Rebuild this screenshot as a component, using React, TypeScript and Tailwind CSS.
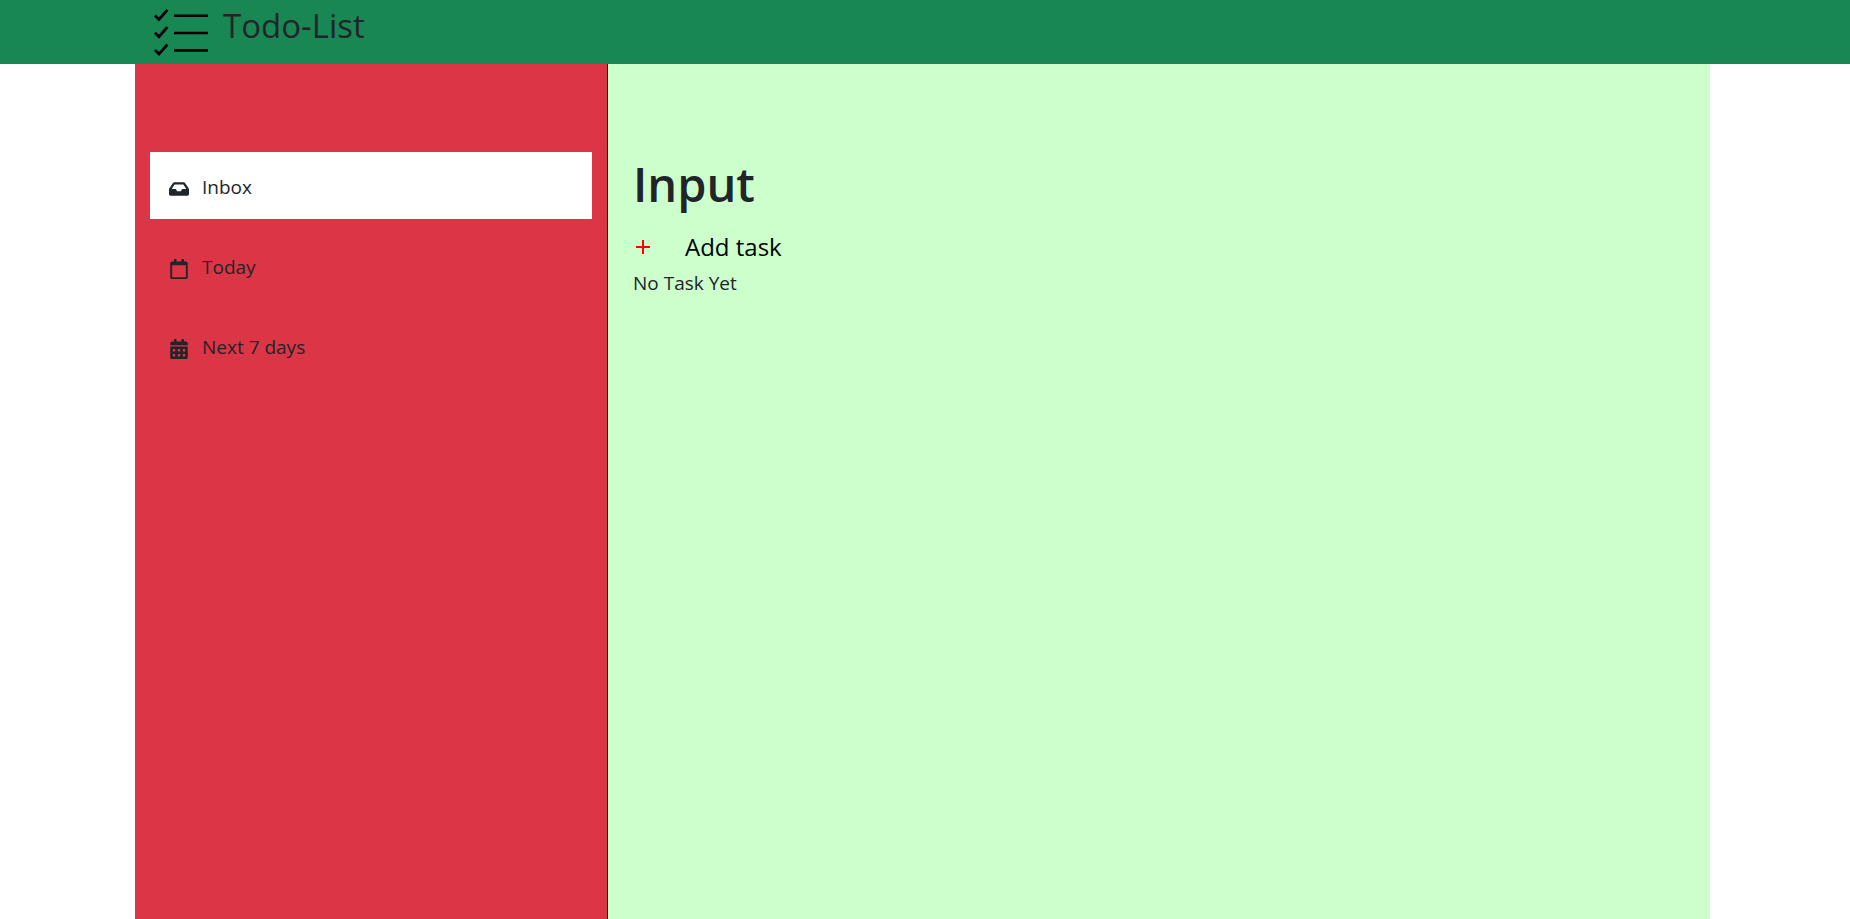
import { useState } from "react";
import type { IconType } from "react-icons";
import { FaCalendarAlt, FaInbox, FaRegCalendar } from "react-icons/fa";

type View = { name: string; title: string; icon: IconType };

const views: View[] = [
  { name: "Inbox", title: "Input", icon: FaInbox },
  { name: "Today", title: "Today", icon: FaRegCalendar },
  { name: "Next 7 days", title: "Next 7 days", icon: FaCalendarAlt },
];

function Logo() {
  return (
    <svg width="56" height="52" viewBox="0 0 56 52" fill="none" stroke="#000" aria-hidden="true">
      {[0, 17.33, 34.67].map((y) => (
        <g key={y} transform={`translate(0 ${y})`}>
          <path d="M2 8.4 6 12.4 14.4 2.8" strokeWidth="2.8" />
          <path d="M21 8.7H55" strokeWidth="2.6" />
        </g>
      ))}
    </svg>
  );
}

function Header() {
  return (
    <header className="flex h-16 items-start gap-[14px] bg-[#198754] pr-[140px] pl-[153px]">
      <div className="pt-[7px]">
        <Logo />
      </div>
      <p className="pt-1 text-[33px] leading-[44px]">Todo-List</p>
    </header>
  );
}

export default function App() {
  const [active, setActive] = useState(0);

  return (
    <div className="flex min-h-screen flex-col bg-white font-['Open_Sans',sans-serif] text-[#212529]">
      <Header />
      <div className="mr-[140px] ml-[135px] flex flex-1">
        <nav
          aria-label="Task views"
          className="flex w-[473px] flex-col gap-[13px] border-r border-black bg-[#dc3545] px-[15px] pt-[88px]"
        >
          {views.map(({ name, icon: Icon }, index) => (
            <button
              key={name}
              type="button"
              onClick={() => setActive(index)}
              className={
                index === active
                  ? "flex h-[67px] items-center gap-[13px] bg-white px-[19px] pt-[2px] text-left"
                  : "flex h-[67px] items-center gap-[13px] px-[19px] pt-[2px] text-left"
              }
            >
              <Icon size={20} className="mt-1" aria-hidden="true" />
              <span className="text-[19px] leading-6">{name}</span>
            </button>
          ))}
        </nav>
        <main className="flex flex-1 flex-col items-start bg-[#ccffcc] px-[25px] pt-[90px]">
          <h1 className="text-[47px] leading-[60px] font-semibold">{views[active].title}</h1>
          <button type="button" className="mt-[17px] flex h-8 items-center gap-[34px] text-2xl text-black">
            <svg width="18" height="18" viewBox="0 0 18 18" stroke="#f00" strokeWidth="2" aria-hidden="true">
              <path d="M3 9H17M10 2V16" />
            </svg>
            Add task
          </button>
          <p className="mt-[6px] text-[19px] leading-7">No Task Yet</p>
        </main>
      </div>
    </div>
  );
}
